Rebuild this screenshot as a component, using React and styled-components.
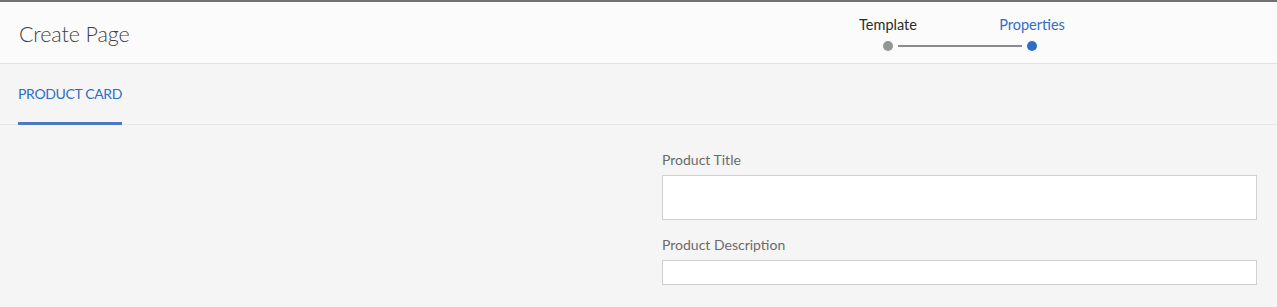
import React from "react";
import styled, { createGlobalStyle } from "styled-components";

const Global = createGlobalStyle`
  html, body { margin: 0; padding: 0; background: #f5f5f5; }
  body { font-family: Lato, "Open Sans", sans-serif; }
  * { box-sizing: border-box; }
`;

const Page = styled.div`
  width: 1277px;
  min-height: 307px;
  background: #f5f5f5;
`;

const Header = styled.header`
  display: flex;
  align-items: stretch;
  height: 64px;
  background: #fbfbfb;
  border-top: 2px solid #707070;
  border-bottom: 1px solid #e1e1e1;
  padding: 0 205px 0 19px;
`;

const Title = styled.h1`
  margin: 0;
  align-self: center;
  padding-top: 3px;
  font-size: 21.5px;
  font-weight: 300;
  color: #3f3f3f;
  letter-spacing: -0.1px;
`;

const Stepper = styled.div`
  margin-left: auto;
  width: 224px;
  padding-top: 13px;
  display: flex;
  flex-direction: column;
  gap: 6px;
`;

const StepLabels = styled.div`
  display: flex;
  justify-content: space-between;
`;

const StepLabel = styled.span`
  width: 80px;
  text-align: center;
  font-size: 14.5px;
  line-height: 20px;
  color: ${(p) => (p.$active ? "#2d6dc6" : "#2c2c2c")};
`;

const Track = styled.div`
  display: flex;
  align-items: center;
  padding: 0 35px;
`;

const Dot = styled.span`
  width: 10px;
  height: 10px;
  border-radius: 50%;
  background: ${(p) => (p.$active ? "#2d6dc6" : "#959595")};
`;

const Connector = styled.span`
  flex: 1;
  height: 2px;
  margin: 0 5px;
  background: #8c8c8c;
`;

const TabBar = styled.nav`
  display: flex;
  height: 61px;
  padding-left: 18px;
  border-bottom: 1px solid #e6e6e6;
`;

const Tab = styled.div`
  display: flex;
  align-items: center;
  height: 61px;
  margin-bottom: -1px;
  font-size: 14px;
  color: #2d6dc6;
  border-bottom: 3px solid ${(p) => (p.$active ? "#4a78c2" : "transparent")};
  letter-spacing: -0.35px;
`;

const Body = styled.main`
  display: grid;
  grid-template-columns: 638px 1fr;
`;

const Form = styled.div`
  grid-column: 2;
  padding: 25px 20px 0 24px;
  display: flex;
  flex-direction: column;
`;

const Field = styled.label`
  display: flex;
  flex-direction: column;
  gap: 5px;
  margin-bottom: 15px;
`;

const Label = styled.span`
  font-size: 14px;
  line-height: 20px;
  color: #6b6b6b;
`;

const Input = styled.input`
  height: ${(p) => p.$h}px;
  border: 1px solid #cfcfcf;
  background: #fff;
  outline: none;
  padding: 0 8px;
  font: inherit;
`;

export default function App() {
  return (
    <Page>
      <Global />
      <Header>
        <Title>Create Page</Title>
        <Stepper>
          <StepLabels>
            <StepLabel>Template</StepLabel>
            <StepLabel $active>Properties</StepLabel>
          </StepLabels>
          <Track>
            <Dot />
            <Connector />
            <Dot $active />
          </Track>
        </Stepper>
      </Header>
      <TabBar>
        <Tab $active>PRODUCT CARD</Tab>
      </TabBar>
      <Body>
        <div />
        <Form>
          <Field>
            <Label>Product Title</Label>
            <Input $h={45} />
          </Field>
          <Field>
            <Label>Product Description</Label>
            <Input $h={25} />
          </Field>
        </Form>
      </Body>
    </Page>
  );
}
